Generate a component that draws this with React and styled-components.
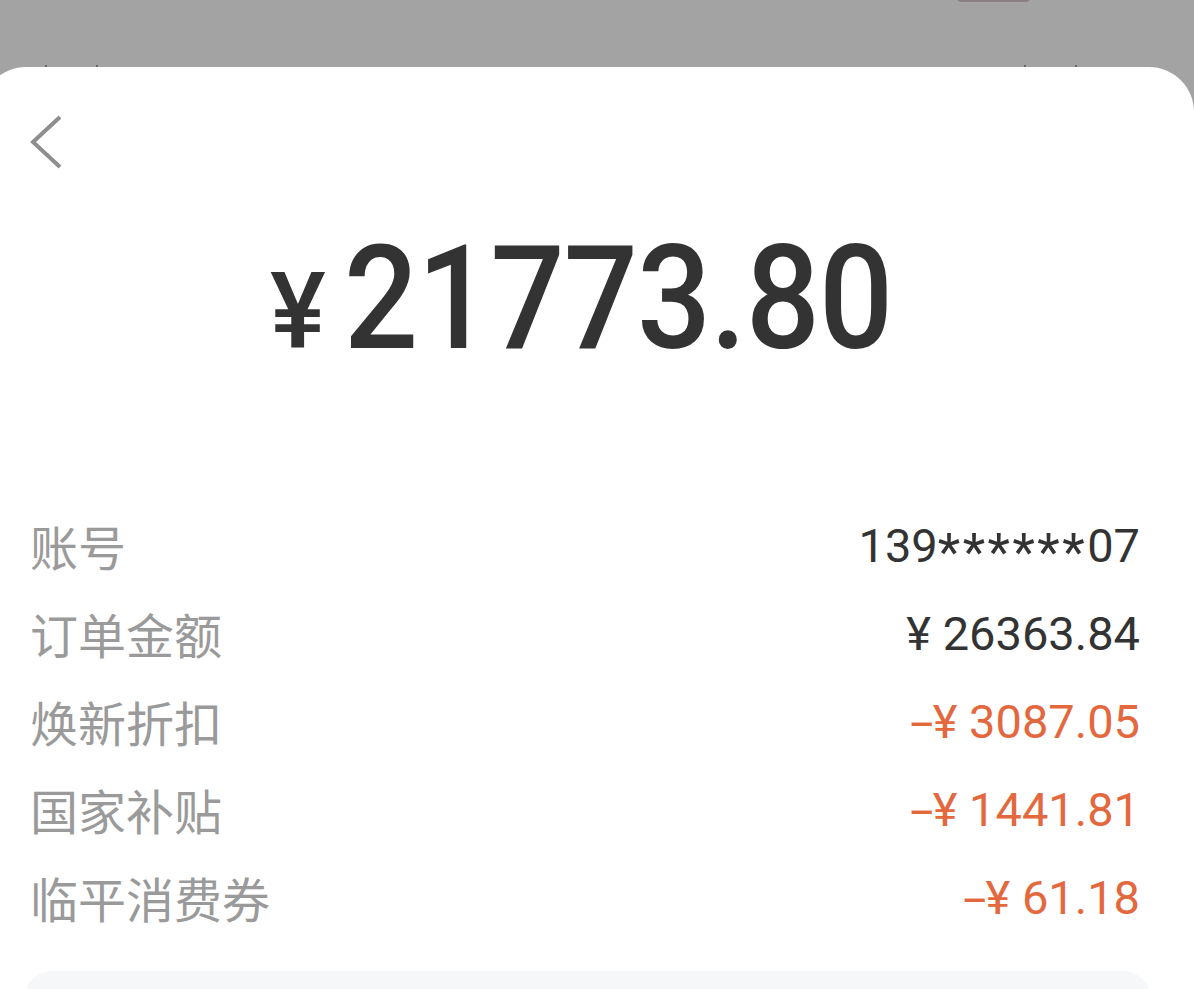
import React from "react";
import styled, { createGlobalStyle } from "styled-components";

const Global = createGlobalStyle`
  html, body { margin: 0; padding: 0; }
  body {
    background: #a3a3a3;
    font-family: Roboto, "Noto Sans CJK SC", sans-serif;
    overflow: hidden;
  }
`;

const Screen = styled.div`
  width: 1194px;
  height: 989px;
  overflow: hidden;
  background: #a3a3a3;
  display: flex;
  flex-direction: column;
`;

const Backdrop = styled.div`
  height: 67px;
  flex: none;
  position: relative;
  background: #a3a3a3;
`;

const TopTab = styled.div`
  position: absolute;
  left: 957px;
  top: -6px;
  width: 73px;
  height: 8px;
  border-radius: 4px;
  background: #8c7f83;
`;

const Tick = styled.span`
  position: absolute;
  bottom: 0;
  width: 2px;
  height: 2px;
  border-radius: 1px;
  background: #555;
`;

const Sheet = styled.div`
  flex: 1;
  margin-left: -19px;
  width: calc(100% + 19px);
  background: #ffffff;
  border-radius: 45px 45px 0 0;
  display: flex;
  flex-direction: column;
`;

const BackButton = styled.button`
  margin: 45px 0 0 45px;
  padding: 0;
  width: 36px;
  height: 60px;
  border: none;
  background: transparent;
  display: flex;
`;

const AmountRow = styled.div`
  margin-top: 54px;
  height: 145px;
  display: flex;
  align-items: baseline;
  justify-content: center;
  padding-right: 12px;
  color: #333333;
  font-family: Roboto, sans-serif;
  font-weight: 500;
  line-height: 1;
`;

const Yen = styled.span`
  font-size: 105px;
  margin-right: 18px;
`;

const Digits = styled.span`
  display: inline-block;
  font-size: 145px;
  letter-spacing: -1px;
  transform: scaleX(0.9);
  transform-origin: left center;
  margin-right: -60px;
`;

const List = styled.div`
  margin-top: 130px;
  padding: 0 54px 0 49px;
  display: flex;
  flex-direction: column;
`;

const Row = styled.div`
  height: 88px;
  display: flex;
  align-items: center;
  justify-content: space-between;
`;

const Label = styled.span`
  font-family: "Noto Sans CJK SC", sans-serif;
  font-size: 48px;
  color: #9a9a9a;
  line-height: 1;
`;

const Value = styled.span`
  font-family: Roboto, sans-serif;
  font-size: 47px;
  font-weight: 400;
  line-height: 1;
  color: ${(p) => (p.$minus ? "#e4683e" : "#333333")};
`;

const Minus = styled.span`
  display: inline-block;
  transform: scaleX(1.8);
  transform-origin: left center;
  margin-right: 10px;
`;

const Stars = styled.span`
  letter-spacing: 2.5px;
  font-size: 52px;
  line-height: 0;
  vertical-align: -8px;
`;

const Card = styled.div`
  margin: 30px 43px 0;
  height: 200px;
  border-radius: 28px;
  background: #f6f7f9;
`;

const rows = [
  {
    label: "账号",
    value: (
      <>
        139<Stars>******</Stars>07
      </>
    ),
  },
  { label: "订单金额", value: "¥ 26363.84" },
  { label: "焕新折扣", value: "¥ 3087.05", minus: true },
  { label: "国家补贴", value: "¥ 1441.81", minus: true },
  { label: "临平消费券", value: "¥ 61.18", minus: true },
];

export default function App() {
  return (
    <>
      <Global />
      <Screen>
        <Backdrop>
          <TopTab />
          <Tick style={{ left: 45 }} />
          <Tick style={{ left: 96 }} />
          <Tick style={{ left: 1024 }} />
          <Tick style={{ left: 1075 }} />
        </Backdrop>
        <Sheet>
          <BackButton aria-label="返回">
            <svg width="36" height="60" viewBox="0 0 36 60">
              <polyline
                points="34,5 7,30 34,55"
                fill="none"
                stroke="#8e8e8e"
                strokeWidth="4"
                strokeLinejoin="miter"
              />
            </svg>
          </BackButton>
          <AmountRow>
            <Yen>¥</Yen>
            <Digits>21773.80</Digits>
          </AmountRow>
          <List>
            {rows.map((r) => (
              <Row key={r.label}>
                <Label>{r.label}</Label>
                <Value $minus={r.minus}>
                  {r.minus && <Minus>-</Minus>}
                  {r.value}
                </Value>
              </Row>
            ))}
          </List>
          <Card />
        </Sheet>
      </Screen>
    </>
  );
}
